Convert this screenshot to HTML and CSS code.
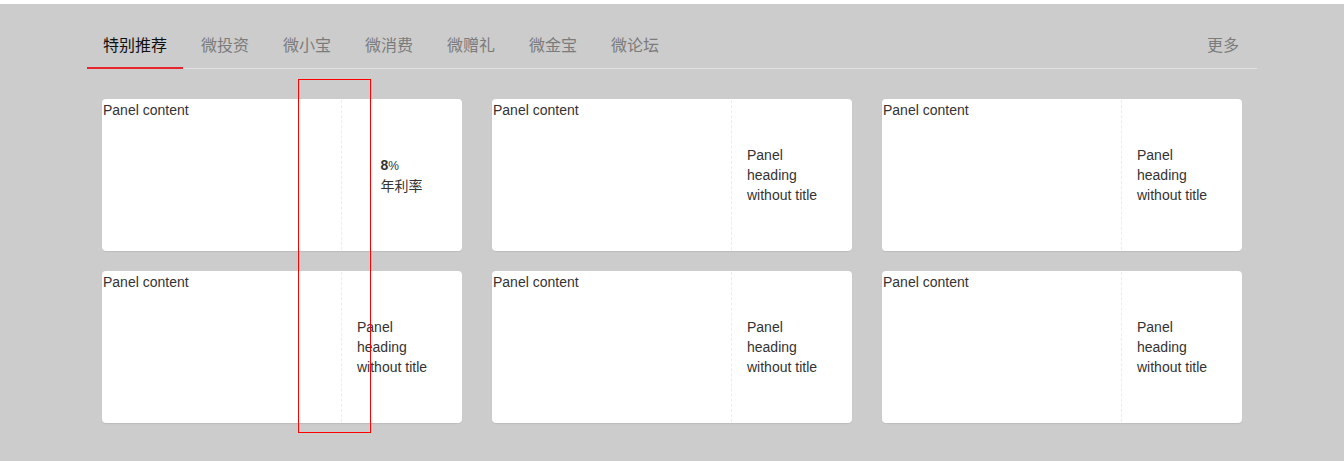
FILE: index.html
```html
<!DOCTYPE html>
<html lang="zh-CN">
<head>
<meta charset="utf-8">
<title>特别推荐</title>
<link rel="stylesheet" href="styles.css">
</head>
<body>
<div class="page">
  <div class="container">
    <ul class="nav-tabs">
      <li class="tab active"><a>特别推荐</a></li>
      <li class="tab"><a>微投资</a></li>
      <li class="tab"><a>微小宝</a></li>
      <li class="tab"><a>微消费</a></li>
      <li class="tab"><a>微赠礼</a></li>
      <li class="tab"><a>微金宝</a></li>
      <li class="tab"><a>微论坛</a></li>
      <li class="tab more"><a>更多</a></li>
    </ul>
    <div class="grid">
      <div class="panel">
        <div class="panel-body">Panel content</div>
        <div class="panel-side center">
          <div class="rate"><div><b class="num">8</b><span class="pct">%</span></div><div>年利率</div></div>
        </div>
      </div>
      <div class="panel">
        <div class="panel-body">Panel content</div>
        <div class="panel-side"><div class="heading">Panel heading without title</div></div>
      </div>
      <div class="panel">
        <div class="panel-body">Panel content</div>
        <div class="panel-side"><div class="heading">Panel heading without title</div></div>
      </div>
      <div class="panel">
        <div class="panel-body">Panel content</div>
        <div class="panel-side"><div class="heading">Panel heading without title</div></div>
      </div>
      <div class="panel">
        <div class="panel-body">Panel content</div>
        <div class="panel-side"><div class="heading">Panel heading without title</div></div>
      </div>
      <div class="panel">
        <div class="panel-body">Panel content</div>
        <div class="panel-side"><div class="heading">Panel heading without title</div></div>
      </div>
    </div>
  </div>
  <div class="debug-box"></div>
</div>
</body>
</html>
```
FILE: styles.css
```css
html, body {
  margin: 0;
  padding: 0;
  background: #fff;
}
body {
  font-family: "Liberation Sans", Arial, "Noto Sans CJK SC", sans-serif;
  font-size: 14px;
  line-height: 20px;
  color: #333;
}
.page {
  position: relative;
  margin-top: 4px;
  min-height: 457px;
  background: #ccc;
  padding-top: 20px;
  box-sizing: border-box;
}
.container {
  width: 1170px;
  margin: 0 auto;
}
.nav-tabs {
  list-style: none;
  margin: 0;
  padding: 0;
  display: flex;
  border-bottom: 1px solid #e2e2e2;
}
.tab {
  margin-right: 2px;
  margin-bottom: -1px;
}
.tab a {
  display: block;
  padding: 9px 16px 12px;
  font-family: "Noto Sans CJK SC", "Liberation Sans", sans-serif;
  font-size: 16px;
  line-height: 22px;
  color: #7b7b7b;
  border-bottom: 2px solid transparent;
}
.tab.active a {
  color: #111;
  border-bottom-color: #e8242c;
}
.tab.more {
  margin-left: auto;
}
.grid {
  display: grid;
  grid-template-columns: repeat(3, 360px);
  column-gap: 30px;
  row-gap: 20px;
  padding: 30px 15px 0;
}
.panel {
  display: flex;
  height: 152px;
  background: #fff;
  border: 1px solid transparent;
  border-radius: 4px;
  box-shadow: 0 1px 1px rgba(0, 0, 0, 0.08);
  box-sizing: border-box;
}
.panel-body {
  width: 239px;
  border-right: 1px dashed #ececec;
  box-sizing: border-box;
}
.panel-side {
  flex: 1;
  display: flex;
  align-items: center;
  padding: 0 15px 0 15px;
}
.panel-side.center {
  justify-content: center;
  padding: 0;
}
.heading {
  width: 78px;
}
.rate {
  font-family: "Liberation Sans", "Noto Sans CJK SC", sans-serif;
}
.num {
  font-weight: bold;
  font-size: 14px;
}
.pct {
  font-size: 12px;
}
.debug-box {
  position: absolute;
  left: 298px;
  top: 75px;
  width: 71px;
  height: 352px;
  border: 1px solid #f00;
}
```
